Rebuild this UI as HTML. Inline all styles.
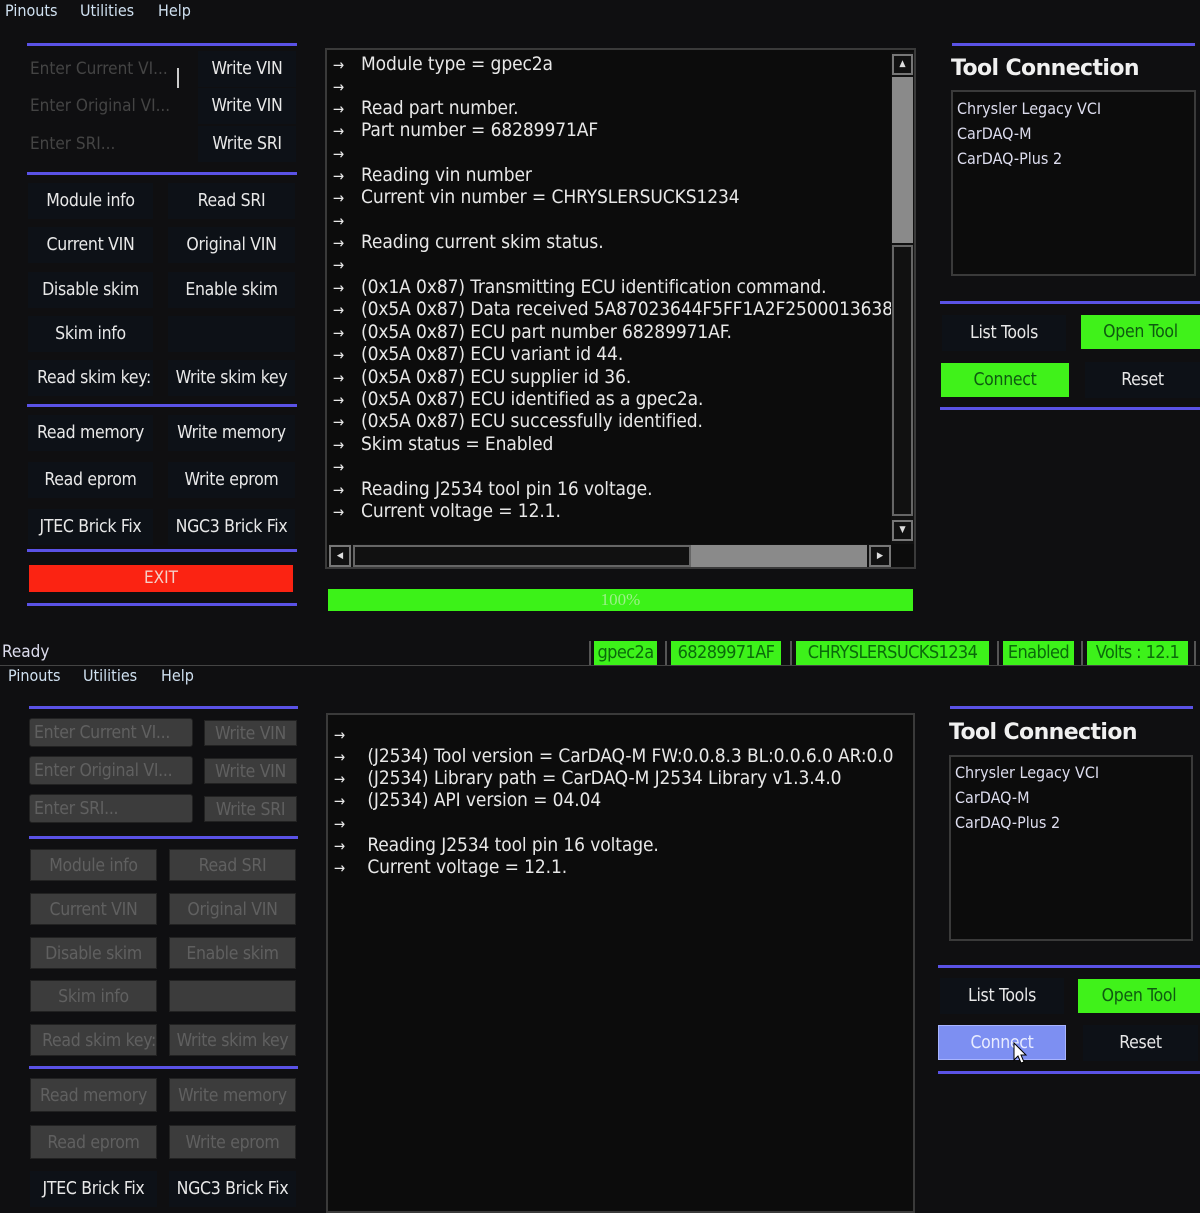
<!DOCTYPE html>
<html><head><meta charset="utf-8"><style>
*{margin:0;padding:0;box-sizing:border-box}
html,body{width:1200px;height:1200px}
body{background:#0f0f11;position:relative;overflow:hidden;font-family:"DejaVu Sans Condensed","Liberation Sans",sans-serif;color:#e8e8e8;font-size:17px}
div{position:absolute}
.m{color:#cfe0f0;font-size:16px}
.bl{height:3px;background:#5a52e6}
.b{text-align:center;white-space:nowrap;overflow:hidden;background:#0d1117;height:36px;line-height:36px;font-size:17.5px;letter-spacing:-0.3px}
.g{background:#3c3c3c;color:#606060;border:1px solid #222}
.ph{color:#444;font-size:17px;white-space:nowrap}
.con{border:2px solid #3a3a3a;background:#0c0c0c;overflow:hidden}
.ln{left:6px;white-space:nowrap;font-size:19px;letter-spacing:-0.1px;height:22px;line-height:22px}
.ln span{display:inline-block;width:28px;font-size:15px}
.st{background:#3df21a;color:#0b6a0b;height:24px;line-height:24px;font-size:18px;white-space:nowrap;letter-spacing:-0.6px;overflow:hidden;text-align:center}
.sep{width:2px;height:24px;background:#555;top:641px}
.lb{border:2px solid #3a3a3a;background:#0c0c0c}
.lb div{position:static;font-size:16px;line-height:25px;padding-left:4px;color:#dde}
.h{font-size:22px;font-weight:bold;font-family:'DejaVu Sans','Liberation Sans',sans-serif;letter-spacing:-0.6px;color:#f0f0f0}
</style></head><body>

<!-- TOP HALF -->
<div class="m" style="left:5px;top:1px">Pinouts</div>
<div class="m" style="left:80px;top:1px">Utilities</div>
<div class="m" style="left:158px;top:1px">Help</div>

<div class="bl" style="left:27px;top:43px;width:270px"></div>
<div class="ph" style="left:30px;top:59px">Enter Current VI...</div>
<div class="ph" style="left:30px;top:96px">Enter Original VI...</div>
<div class="ph" style="left:30px;top:134px">Enter SRI...</div>
<div style="left:177px;top:68px;width:2px;height:20px;background:#ccc"></div>
<div class="b" style="left:198px;top:51px;width:98px">Write VIN</div>
<div class="b" style="left:198px;top:88px;width:98px">Write VIN</div>
<div class="b" style="left:198px;top:126px;width:98px">Write SRI</div>
<div class="bl" style="left:27px;top:172px;width:270px"></div>

<div class="b" style="left:28px;top:183px;width:125px">Module info</div>
<div class="b" style="left:168px;top:183px;width:127px">Read SRI</div>
<div class="b" style="left:28px;top:227px;width:125px">Current VIN</div>
<div class="b" style="left:168px;top:227px;width:127px">Original VIN</div>
<div class="b" style="left:28px;top:272px;width:125px">Disable skim</div>
<div class="b" style="left:168px;top:272px;width:127px">Enable skim</div>
<div class="b" style="left:28px;top:316px;width:125px">Skim info</div>
<div class="b" style="left:168px;top:316px;width:127px"></div>
<div class="b" style="left:28px;top:360px;width:125px;text-align:right;padding-right:2px">Read skim key:</div>
<div class="b" style="left:168px;top:360px;width:127px">Write skim key</div>
<div class="bl" style="left:27px;top:404px;width:270px"></div>
<div class="b" style="left:28px;top:415px;width:125px">Read memory</div>
<div class="b" style="left:168px;top:415px;width:127px">Write memory</div>
<div class="b" style="left:28px;top:462px;width:125px">Read eprom</div>
<div class="b" style="left:168px;top:462px;width:127px">Write eprom</div>
<div class="b" style="left:28px;top:509px;width:125px">JTEC Brick Fix</div>
<div class="b" style="left:168px;top:509px;width:127px">NGC3 Brick Fix</div>
<div class="bl" style="left:27px;top:549px;width:270px"></div>
<div style="left:29px;top:565px;width:264px;height:27px;background:#fb2312;color:#f4d0c8;text-align:center;line-height:27px;font-size:17px">EXIT</div>
<div class="bl" style="left:27px;top:603px;width:270px"></div>

<div class="con" style="left:325px;top:48px;width:591px;height:521px">
 <div class="ln" style="top:3px"><span>→</span>Module type = gpec2a</div>
 <div class="ln" style="top:25px"><span>→</span></div>
 <div class="ln" style="top:47px"><span>→</span>Read part number.</div>
 <div class="ln" style="top:69px"><span>→</span>Part number = 68289971AF</div>
 <div class="ln" style="top:92px"><span>→</span></div>
 <div class="ln" style="top:114px"><span>→</span>Reading vin number</div>
 <div class="ln" style="top:136px"><span>→</span>Current vin number = CHRYSLERSUCKS1234</div>
 <div class="ln" style="top:159px"><span>→</span></div>
 <div class="ln" style="top:181px"><span>→</span>Reading current skim status.</div>
 <div class="ln" style="top:203px"><span>→</span></div>
 <div class="ln" style="top:226px"><span>→</span>(0x1A 0x87) Transmitting ECU identification command.</div>
 <div class="ln" style="top:248px"><span>→</span>(0x5A 0x87) Data received 5A87023644F5FF1A2F25000136383</div>
 <div class="ln" style="top:271px"><span>→</span>(0x5A 0x87) ECU part number 68289971AF.</div>
 <div class="ln" style="top:293px"><span>→</span>(0x5A 0x87) ECU variant id 44.</div>
 <div class="ln" style="top:316px"><span>→</span>(0x5A 0x87) ECU supplier id 36.</div>
 <div class="ln" style="top:338px"><span>→</span>(0x5A 0x87) ECU identified as a gpec2a.</div>
 <div class="ln" style="top:360px"><span>→</span>(0x5A 0x87) ECU successfully identified.</div>
 <div class="ln" style="top:383px"><span>→</span>Skim status = Enabled</div>
 <div class="ln" style="top:405px"><span>→</span></div>
 <div class="ln" style="top:428px"><span>→</span>Reading J2534 tool pin 16 voltage.</div>
 <div class="ln" style="top:450px"><span>→</span>Current voltage = 12.1.</div>
 <div style="left:564px;top:2px;width:24px;height:492px;background:#111">
  <div style="left:1px;top:2px;width:21px;height:21px;border:2px solid #777;color:#ddd;font-size:9px;text-align:center;line-height:17px">▲</div>
  <div style="left:1px;top:25px;width:21px;height:166px;background:#8a8a8a"></div>
  <div style="left:1px;top:193px;width:21px;height:271px;border:2px solid #666"></div>
  <div style="left:1px;top:468px;width:21px;height:21px;border:2px solid #777;color:#ddd;font-size:9px;text-align:center;line-height:17px">▼</div>
 </div>
 <div style="left:2px;top:494px;width:562px;height:24px;background:#111">
  <div style="left:0;top:1px;width:22px;height:22px;border:2px solid #777;color:#ddd;font-size:9px;text-align:center;line-height:18px">◀</div>
  <div style="left:24px;top:1px;width:338px;height:22px;border:2px solid #666"></div>
  <div style="left:362px;top:1px;width:176px;height:22px;background:#8a8a8a"></div>
  <div style="left:540px;top:1px;width:22px;height:22px;border:2px solid #777;color:#ddd;font-size:9px;text-align:center;line-height:18px">▶</div>
 </div>
</div>
<div style="left:328px;top:589px;width:585px;height:22px;background:#3cf218;color:#9ef08a;text-align:center;font-family:'Liberation Serif',serif;font-size:17px;line-height:22px">100%</div>

<div style="left:2px;top:642px;font-size:17px;color:#dde">Ready</div>
<div class="sep" style="left:589px"></div>
<div class="st" style="left:594px;top:641px;width:63px">gpec2a</div>
<div class="sep" style="left:665px"></div>
<div class="st" style="left:671px;top:641px;width:110px">68289971AF</div>
<div class="sep" style="left:790px"></div>
<div class="st" style="left:796px;top:641px;width:193px">CHRYSLERSUCKS1234</div>
<div class="sep" style="left:997px"></div>
<div class="st" style="left:1003px;top:641px;width:71px">Enabled</div>
<div class="sep" style="left:1081px"></div>
<div class="st" style="left:1087px;top:641px;width:101px">Volts : 12.1</div>
<div class="sep" style="left:1194px"></div>
<div style="left:0;top:665px;width:1200px;height:1px;background:#444"></div>

<div class="bl" style="left:952px;top:43px;width:243px"></div>
<div class="h" style="left:951px;top:56px">Tool Connection</div>
<div class="lb" style="left:951px;top:90px;width:245px;height:186px;padding-top:4px">
 <div>Chrysler Legacy VCI</div><div>CarDAQ-M</div><div>CarDAQ-Plus 2</div></div>
<div class="bl" style="left:940px;top:301px;width:260px"></div>
<div class="b" style="left:942px;top:315px;width:124px;height:36px">List Tools</div>
<div class="b" style="left:1081px;top:315px;width:119px;height:34px;line-height:34px;background:#40f21a;color:#0e5a10">Open Tool</div>
<div class="b" style="left:941px;top:363px;width:128px;height:34px;line-height:34px;background:#40f21a;color:#0e5a10">Connect</div>
<div class="b" style="left:1085px;top:362px;width:115px">Reset</div>
<div class="bl" style="left:940px;top:407px;width:260px"></div>

<!-- BOTTOM HALF -->
<div class="m" style="left:8px;top:666px">Pinouts</div>
<div class="m" style="left:83px;top:666px">Utilities</div>
<div class="m" style="left:161px;top:666px">Help</div>

<div class="bl" style="left:29px;top:706px;width:269px"></div>
<div class="b g" style="left:29px;top:718px;width:164px;height:29px;line-height:29px;text-align:left;padding-left:4px;border-radius:3px">Enter Current VI...</div>
<div class="b g" style="left:29px;top:756px;width:164px;height:29px;line-height:29px;text-align:left;padding-left:4px;border-radius:3px">Enter Original VI...</div>
<div class="b g" style="left:29px;top:794px;width:164px;height:29px;line-height:29px;text-align:left;padding-left:4px;border-radius:3px">Enter SRI...</div>
<div class="b g" style="left:204px;top:720px;width:93px;height:26px;line-height:26px">Write VIN</div>
<div class="b g" style="left:204px;top:758px;width:93px;height:26px;line-height:26px">Write VIN</div>
<div class="b g" style="left:204px;top:796px;width:93px;height:26px;line-height:26px">Write SRI</div>
<div class="bl" style="left:29px;top:836px;width:269px"></div>

<div class="b g" style="left:30px;top:849px;width:127px;height:32px;line-height:32px">Module info</div>
<div class="b g" style="left:169px;top:849px;width:127px;height:32px;line-height:32px">Read SRI</div>
<div class="b g" style="left:30px;top:893px;width:127px;height:32px;line-height:32px">Current VIN</div>
<div class="b g" style="left:169px;top:893px;width:127px;height:32px;line-height:32px">Original VIN</div>
<div class="b g" style="left:30px;top:937px;width:127px;height:32px;line-height:32px">Disable skim</div>
<div class="b g" style="left:169px;top:937px;width:127px;height:32px;line-height:32px">Enable skim</div>
<div class="b g" style="left:30px;top:980px;width:127px;height:32px;line-height:32px">Skim info</div>
<div class="b g" style="left:169px;top:980px;width:127px;height:32px;line-height:32px"></div>
<div class="b g" style="left:30px;top:1024px;width:127px;height:32px;line-height:32px;text-align:right">Read skim key:</div>
<div class="b g" style="left:169px;top:1024px;width:127px;height:32px;line-height:32px">Write skim key</div>
<div class="bl" style="left:29px;top:1066px;width:269px"></div>
<div class="b g" style="left:30px;top:1078px;width:127px;height:34px;line-height:34px">Read memory</div>
<div class="b g" style="left:169px;top:1078px;width:127px;height:34px;line-height:34px">Write memory</div>
<div class="b g" style="left:30px;top:1125px;width:127px;height:34px;line-height:34px">Read eprom</div>
<div class="b g" style="left:169px;top:1125px;width:127px;height:34px;line-height:34px">Write eprom</div>
<div class="b" style="left:30px;top:1171px;width:127px">JTEC Brick Fix</div>
<div class="b" style="left:169px;top:1171px;width:127px">NGC3 Brick Fix</div>

<div class="con" style="left:326px;top:713px;width:589px;height:500px">
 <div class="ln" style="top:8px"><span>→</span></div>
 <div class="ln" style="top:30px"><span>→</span>&nbsp;(J2534) Tool version = CarDAQ-M FW:0.0.8.3 BL:0.0.6.0 AR:0.0</div>
 <div class="ln" style="top:52px"><span>→</span>&nbsp;(J2534) Library path = CarDAQ-M J2534 Library v1.3.4.0</div>
 <div class="ln" style="top:74px"><span>→</span>&nbsp;(J2534) API version = 04.04</div>
 <div class="ln" style="top:97px"><span>→</span></div>
 <div class="ln" style="top:119px"><span>→</span>&nbsp;Reading J2534 tool pin 16 voltage.</div>
 <div class="ln" style="top:141px"><span>→</span>&nbsp;Current voltage = 12.1.</div>
</div>

<div class="bl" style="left:950px;top:706px;width:243px"></div>
<div class="h" style="left:949px;top:720px">Tool Connection</div>
<div class="lb" style="left:949px;top:755px;width:244px;height:186px;padding-top:3px">
 <div>Chrysler Legacy VCI</div><div>CarDAQ-M</div><div>CarDAQ-Plus 2</div></div>
<div class="bl" style="left:938px;top:965px;width:262px"></div>
<div class="b" style="left:940px;top:978px;width:124px">List Tools</div>
<div class="b" style="left:1078px;top:979px;width:122px;height:34px;line-height:34px;background:#40f21a;color:#0e5a10">Open Tool</div>
<div class="b" style="left:938px;top:1025px;width:128px;height:35px;line-height:35px;background:#7d8ff2;color:#e8ecff;border:1px solid #a8b4ff">Connect</div>
<div class="b" style="left:1083px;top:1025px;width:115px">Reset</div>
<div class="bl" style="left:938px;top:1071px;width:262px"></div>
<svg style="position:absolute;left:1013px;top:1042px" width="16" height="24" viewBox="0 0 16 24"><path d="M1 1 L1 18 L5 14 L8 21 L11 20 L8 13 L13 13 Z" fill="#fff" stroke="#000" stroke-width="1"/></svg>
</body></html>
